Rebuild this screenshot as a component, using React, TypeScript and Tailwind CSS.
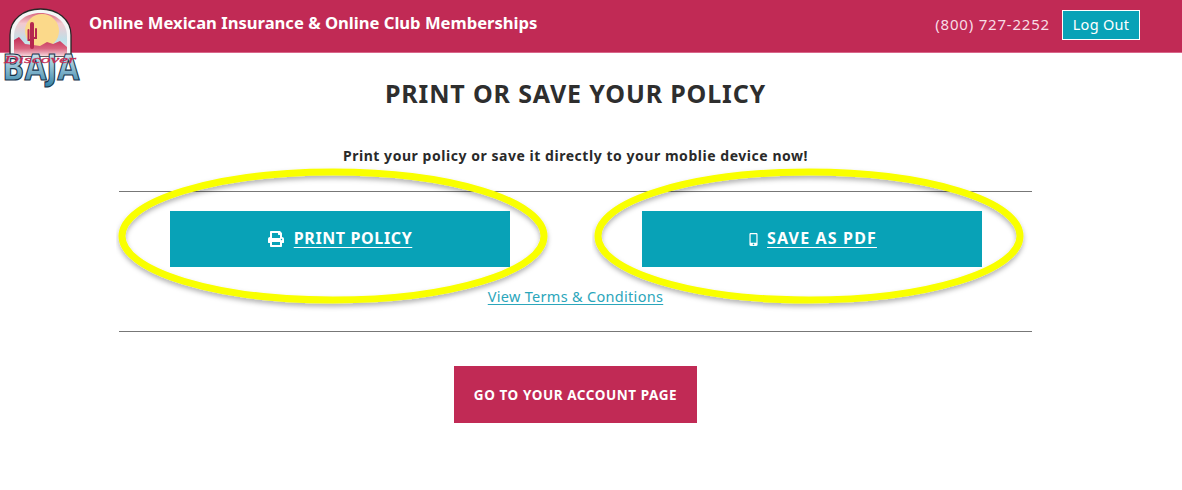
import { FaMobileAlt, FaPrint } from "react-icons/fa";

const font = "font-['Noto_Sans',sans-serif]";

function Logo() {
  return (
    <svg viewBox="0 0 84 90" width="84" height="90" className="absolute left-0 top-0">
      <defs>
        <linearGradient id="sky" x1="0" y1="0" x2="0" y2="1">
          <stop offset="0" stopColor="#d9657f" />
          <stop offset="0.25" stopColor="#f3c9cf" />
          <stop offset="0.65" stopColor="#bfe0e8" />
          <stop offset="1" stopColor="#e9f2f3" />
        </linearGradient>
        <linearGradient id="land" x1="0" y1="0" x2="0" y2="1">
          <stop offset="0" stopColor="#c22b55" />
          <stop offset="0.6" stopColor="#d9647f" />
          <stop offset="1" stopColor="#f6d5db" />
        </linearGradient>
        <linearGradient id="baja" x1="0" y1="0" x2="0" y2="1">
          <stop offset="0" stopColor="#e4f0f4" />
          <stop offset="0.5" stopColor="#8fbdd2" />
          <stop offset="1" stopColor="#2c7ea6" />
        </linearGradient>
      </defs>
      <path d="M10 56V35C10 19 24 9 40.500 9S71 19 71 35V56Z" fill="#f4f6f6" stroke="#262626" strokeWidth="1.300" />
      <path d="M14 55V36C14 22 26 13 40.500 13S67 22 67 36V55Z" fill="url(#sky)" />
      <circle cx="42" cy="31" r="17" fill="#fbd98a" />
      <path d="M14 40L19 37L25 44L33 45L40 46L47 42L53 44L60 41L67 47V56H14Z" fill="url(#land)" />
      <path d="M32 47V24" stroke="#b5264f" strokeWidth="4" strokeLinecap="round" />
      <path d="M32 40H28.500V30M32 38H36V29" fill="none" stroke="#b5264f" strokeWidth="2" strokeLinecap="round" />
      <text
        x="41"
        y="80"
        textAnchor="middle"
        fontFamily="'DejaVu Sans', sans-serif"
        fontWeight="700"
        fontSize="35"
        textLength="77"
        lengthAdjust="spacingAndGlyphs"
        fill="url(#baja)"
        stroke="#15334b"
        strokeWidth="1.200"
      >
        BAJA
      </text>
      <text
        x="40"
        y="63"
        textAnchor="middle"
        fontFamily="'Liberation Serif', serif"
        fontStyle="italic"
        fontSize="11"
        textLength="72"
        lengthAdjust="spacingAndGlyphs"
        fill="#c22b55"
        stroke="#c22b55"
        strokeWidth="0.300"
      >
        Discover
      </text>
    </svg>
  );
}

// hand-drawn highlight rings laid over the two buttons
function Ring({ className }: { className: string }) {
  return (
    <svg viewBox="0 0 440 146" width="440" height="146" className={`pointer-events-none absolute ${className}`}>
      <defs>
        <filter id="ringShadow" x="-5%" y="-10%" width="110%" height="125%">
          <feDropShadow dx="0" dy="3" stdDeviation="2.500" floodColor="#000" floodOpacity="0.3" />
        </filter>
      </defs>
      <ellipse cx="217" cy="70" rx="211" ry="64" fill="none" stroke="#f9ff00" strokeWidth="7" filter="url(#ringShadow)" />
    </svg>
  );
}

export default function App() {
  return (
    <div className={`relative h-[490px] w-[1182px] overflow-hidden bg-white ${font}`}>
      <header className="flex h-[53px] items-center border-b border-[#d9668a] bg-[#c12a55] pl-[89px] pr-[42px]">
        <span className="mb-[6px] text-[16.600px] font-bold leading-[24px] text-white">
          Online Mexican Insurance &amp; Online Club Memberships
        </span>
        <span className="mb-[4px] ml-auto text-[15px] leading-[20px] tracking-[0.8px] text-[#f8dde5]">(800) 727-2252</span>
        <button className="mb-[2px] ml-[12px] flex h-[30px] w-[78px] items-center justify-center border border-white bg-[#08a2b7] text-[14.500px] tracking-[0.3px] text-white">
          Log Out
        </button>
      </header>
      <Logo />

      <main className="ml-[119px] flex w-[913px] flex-col items-center">
        <h1 className="mt-[23px] text-[25px] font-bold leading-[34px] tracking-[0.85px] text-[#2e2e2e]">
          PRINT OR SAVE YOUR POLICY
        </h1>
        <p className="mt-[36px] text-[14px] font-bold leading-[20px] tracking-[0.54px] text-[#2a2a2a]">
          Print your policy or save it directly to your moblie device now!
        </p>
        <div className="mt-[25px] flex w-full flex-col items-center border-y border-[#777] pb-[24px] pt-[19px]">
          <div className="flex w-full justify-between pl-[51px] pr-[50px]">
            <a className="flex h-[56px] w-[340px] items-center justify-center gap-[10px] bg-[#08a2b7] text-white">
              <FaPrint size={16} />
              <span className="mb-[2px] text-[16px] font-bold tracking-[0.62px] underline underline-offset-[3px]">PRINT POLICY</span>
            </a>
            <a className="flex h-[56px] w-[340px] items-center justify-center gap-[7px] bg-[#08a2b7] text-white">
              <FaMobileAlt size={13} />
              <span className="mb-[2px] text-[16px] font-bold tracking-[1.15px] underline underline-offset-[3px]">SAVE AS PDF</span>
            </a>
          </div>
          <a className="mb-[1px] mt-[19px] text-[14.500px] leading-[20px] tracking-[0.3px] text-[#2ba6bb] underline underline-offset-2">
            View Terms &amp; Conditions
          </a>
        </div>
        <button className="mt-[34px] h-[57px] w-[243px] bg-[#c12a55] pt-[2px] text-[13.500px] font-bold tracking-[0.57px] text-white">
          GO TO YOUR ACCOUNT PAGE
        </button>
      </main>

      <Ring className="left-[116px] top-[166px]" />
      <Ring className="left-[592px] top-[166px]" />
    </div>
  );
}
